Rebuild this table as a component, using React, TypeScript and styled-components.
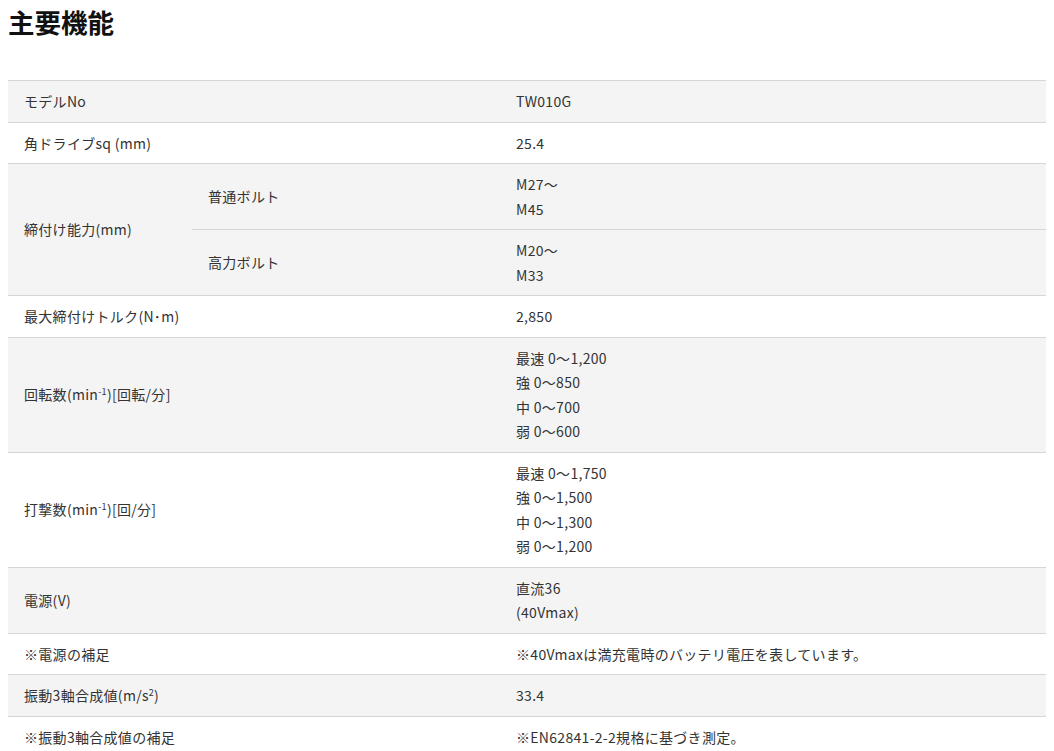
import React from "react";
import styled, { createGlobalStyle } from "styled-components";

const Global = createGlobalStyle`
  html, body { background: #fff; }
  body {
    margin: 8px;
    font-family: "Noto Sans CJK JP", "Noto Sans", sans-serif;
    color: #333;
  }
`;

const Title = styled.h2`
  margin: 0 0 44px;
  font-size: 26.5px;
  line-height: 28px;
  font-weight: 700;
  color: #111;
`;

const Table = styled.table`
  width: 100%;
  border-collapse: collapse;
  table-layout: fixed;
  font-size: 14px;
  line-height: 24.5px;
  letter-spacing: 0.3px;
`;

const Row = styled.tr<{ $shade?: boolean }>`
  background: ${(p) => (p.$shade ? "#f4f4f4" : "#fff")};
`;

const Cell = styled.td`
  padding: 8px 16px;
  border-top: 1px solid #d6d6d6;
  vertical-align: middle;
  text-align: left;
  font-weight: 400;
`;

const Line = styled.div``;

const Sup = styled.sup`
  font-size: 9px;
  line-height: 0;
  vertical-align: 5px;
`;

type Spec = {
  label: React.ReactNode;
  values: string[];
};

const rows: Spec[] = [
  { label: "モデルNo", values: ["TW010G"] },
  { label: "角ドライブsq (mm)", values: ["25.4"] },
];

const rows2: Spec[] = [
  { label: "最大締付けトルク(N･m)", values: ["2,850"] },
  {
    label: (
      <>
        回転数(min<Sup>-1</Sup>)[回転/分]
      </>
    ),
    values: ["最速 0〜1,200", "強 0〜850", "中 0〜700", "弱 0〜600"],
  },
  {
    label: (
      <>
        打撃数(min<Sup>-1</Sup>)[回/分]
      </>
    ),
    values: ["最速 0〜1,750", "強 0〜1,500", "中 0〜1,300", "弱 0〜1,200"],
  },
  { label: "電源(V)", values: ["直流36", "(40Vmax)"] },
  { label: "※電源の補足", values: ["※40Vmaxは満充電時のバッテリ電圧を表しています。"] },
  {
    label: (
      <>
        振動3軸合成値(m/s<Sup>2</Sup>)
      </>
    ),
    values: ["33.4"],
  },
  { label: "※振動3軸合成値の補足", values: ["※EN62841-2-2規格に基づき測定。"] },
];

const Values = ({ values }: { values: string[] }) => (
  <>
    {values.map((v, i) => (
      <Line key={i}>{v}</Line>
    ))}
  </>
);

export default function App() {
  return (
    <>
      <Global />
      <Title>主要機能</Title>
      <Table>
        <colgroup>
          <col style={{ width: 184 }} />
          <col style={{ width: 308 }} />
          <col />
        </colgroup>
        <tbody>
          {rows.map((r, i) => (
            <Row key={i} $shade={i % 2 === 0}>
              <Cell colSpan={2}>{r.label}</Cell>
              <Cell>
                <Values values={r.values} />
              </Cell>
            </Row>
          ))}
          <Row $shade>
            <Cell rowSpan={2}>締付け能力(mm)</Cell>
            <Cell>普通ボルト</Cell>
            <Cell>
              <Values values={["M27〜", "M45"]} />
            </Cell>
          </Row>
          <Row $shade>
            <Cell>高力ボルト</Cell>
            <Cell>
              <Values values={["M20〜", "M33"]} />
            </Cell>
          </Row>
          {rows2.map((r, i) => (
            <Row key={i} $shade={i % 2 === 1}>
              <Cell colSpan={2}>{r.label}</Cell>
              <Cell>
                <Values values={r.values} />
              </Cell>
            </Row>
          ))}
        </tbody>
      </Table>
    </>
  );
}
